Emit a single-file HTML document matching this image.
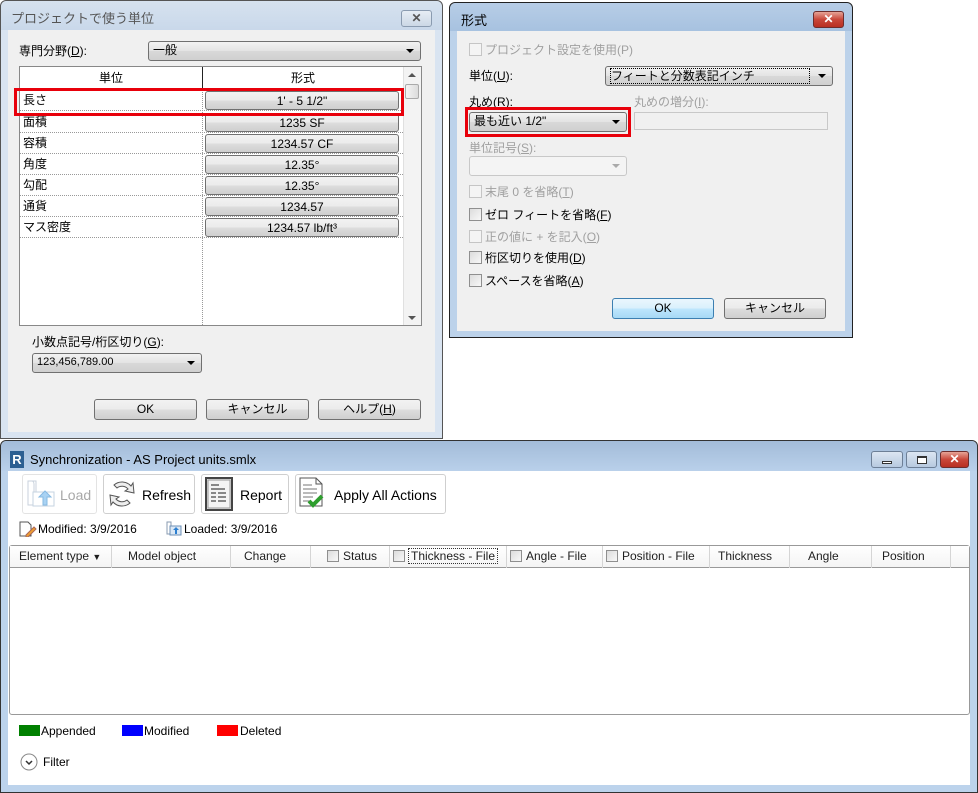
<!DOCTYPE html>
<html><head><meta charset="utf-8"><style>
*{box-sizing:border-box;margin:0;padding:0}
body{width:978px;height:793px;background:#fff;position:relative;overflow:hidden;font-family:"Liberation Sans","Noto Sans CJK JP",sans-serif;font-size:12px;color:#000}
.a{position:absolute}
.jp{font-family:"Liberation Sans","Noto Sans CJK JP",sans-serif;font-size:12px;white-space:nowrap}
.btn{position:absolute;border:1px solid #707070;border-radius:3px;background:linear-gradient(#f2f2f2 0%,#ebebeb 50%,#dddddd 51%,#cfcfcf 100%);text-align:center;font-size:12px;line-height:18px}
.cmb{position:absolute;border:1px solid #707070;border-radius:3px;background:linear-gradient(#f2f2f2,#e3e3e3 50%,#d8d8d8 51%,#d0d0d0);font-size:12px;line-height:17px;padding-left:4px}
.arr{position:absolute;right:6px;top:7px;width:0;height:0;border-left:4px solid transparent;border-right:4px solid transparent;border-top:4px solid #000}
.cb{position:absolute;width:13px;height:13px;border:1px solid #8f8f8f;background:linear-gradient(135deg,#dcdcdc,#f8f8f8)}
.dis{color:#a0a0a0}
.row{position:absolute;left:20px;width:383px;height:21px;border-bottom:1px dotted #999}
.row span{position:absolute;left:3px;top:1px}
.row .b{left:185px;top:1px;width:194px;height:19px}
.hd{position:absolute;top:0;height:22px;line-height:21px;border-right:1px solid #d5d5d5;font-size:12px;color:#1e1e1e}
</style></head><body>

<!-- Window 1 -->
<div class="a" style="left:0;top:0;width:443px;height:439px;border:1px solid #555;border-radius:6px 6px 0 0;background:#d9e4f1"></div>
<div class="a" style="left:1px;top:1px;width:441px;height:29px;background:linear-gradient(#d6e2ef,#c9d8ea);border-radius:6px 6px 0 0"></div>
<div class="a jp" style="left:11px;top:8px;font-size:13px;color:#555">プロジェクトで使う単位</div>
<div class="a" style="left:401px;top:10px;width:31px;height:17px;border:1px solid #8a9bb0;border-radius:3px;background:linear-gradient(#e6edf5,#ccd8e6);text-align:center;font-size:12px;line-height:15px;color:#555;font-weight:bold">✕</div>
<div class="a" style="left:8px;top:30px;width:427px;height:402px;background:#f0f0f0"></div>
<div class="a jp" style="left:19px;top:42px">専門分野(<u>D</u>):</div>
<div class="cmb" style="left:148px;top:41px;width:273px;height:20px">一般<div class="arr"></div></div>
<!-- table -->
<div class="a" style="left:19px;top:66px;width:403px;height:260px;border:1px solid #888;background:#fff"></div>
<div class="a" style="left:20px;top:67px;width:383px;height:22px;border-bottom:1px solid #222;background:#fff"></div>
<div class="a jp" style="left:20px;top:69px;width:182px;text-align:center">単位</div>
<div class="a jp" style="left:203px;top:69px;width:200px;text-align:center">形式</div>
<div class="a" style="left:202px;top:67px;width:1px;height:22px;background:#222"></div>
<div class="a" style="left:202px;top:89px;width:0;height:236px;border-left:1px dotted #999"></div>
<div class="a" style="left:403px;top:67px;width:18px;height:258px;background:#f3f3f3;border-left:1px solid #e0e0e0"></div>
<div class="a" style="left:408px;top:73px;border-left:4px solid transparent;border-right:4px solid transparent;border-bottom:4px solid #555"></div>
<div class="a" style="left:405px;top:84px;width:14px;height:15px;border:1px solid #aaa;border-radius:2px;background:linear-gradient(90deg,#f4f4f4,#dcdcdc)"></div>
<div class="a" style="left:408px;top:316px;border-left:4px solid transparent;border-right:4px solid transparent;border-top:4px solid #555"></div>
<div class="row" style="top:90px"><span>長さ</span><div class="btn b">1' - 5 1/2"</div></div>
<div class="row" style="top:112px"><span>面積</span><div class="btn b">1235 SF</div></div>
<div class="row" style="top:133px"><span>容積</span><div class="btn b">1234.57 CF</div></div>
<div class="row" style="top:154px"><span>角度</span><div class="btn b">12.35°</div></div>
<div class="row" style="top:175px"><span>勾配</span><div class="btn b">12.35°</div></div>
<div class="row" style="top:196px"><span>通貨</span><div class="btn b">1234.57</div></div>
<div class="row" style="top:217px"><span>マス密度</span><div class="btn b">1234.57 lb/ft³</div></div>
<div class="a" style="left:14px;top:88px;width:390px;height:28px;border:3px solid #e8000b"></div>
<div class="a jp" style="left:32px;top:333px">小数点記号/桁区切り(<u>G</u>):</div>
<div class="cmb" style="left:32px;top:353px;width:170px;height:20px;font-size:11px">123,456,789.00<div class="arr"></div></div>
<div class="btn" style="left:94px;top:399px;width:103px;height:21px">OK</div>
<div class="btn" style="left:206px;top:399px;width:103px;height:21px">キャンセル</div>
<div class="btn" style="left:318px;top:399px;width:103px;height:21px">ヘルプ(<u>H</u>)</div>

<!-- Window 2 -->
<div class="a" style="left:449px;top:2px;width:404px;height:336px;border:1px solid #222;border-radius:6px 6px 0 0;background:#bcd2ea"></div>
<div class="a" style="left:450px;top:3px;width:402px;height:28px;background:linear-gradient(#b7cde6,#a7c2e0);border-radius:6px 6px 0 0"></div>
<div class="a jp" style="left:461px;top:10px;font-size:13px">形式</div>
<div class="a" style="left:813px;top:11px;width:31px;height:17px;border:1px solid #6d2d2d;border-radius:3px;background:linear-gradient(#e6a497,#c9473a 50%,#b82f22);text-align:center;color:#fff;font-weight:bold;line-height:15px">✕</div>
<div class="a" style="left:457px;top:31px;width:388px;height:300px;background:#f0f0f0"></div>
<div class="cb" style="left:469px;top:43px;border-color:#c5c5c5;background:#f4f4f4"></div>
<div class="a jp dis" style="left:485px;top:41px">プロジェクト設定を使用(P)</div>
<div class="a jp" style="left:469px;top:67px">単位(<u>U</u>):</div>
<div class="cmb" style="left:605px;top:66px;width:228px;height:20px"><span style="border:1px dotted #000;display:inline-block;width:200px;line-height:14px;margin-top:1px">フィートと分数表記インチ</span><div class="arr"></div></div>
<div class="a jp" style="left:469px;top:93px">丸め(<u>R</u>):</div>
<div class="a jp dis" style="left:634px;top:93px">丸めの増分(<u>I</u>):</div>
<div class="cmb" style="left:469px;top:112px;width:158px;height:20px">最も近い 1/2"<div class="arr"></div></div>
<div class="a" style="left:465px;top:107px;width:166px;height:30px;border:3px solid #e8000b"></div>
<div class="a" style="left:634px;top:112px;width:194px;height:18px;border:1px solid #c8c8c8;background:#f0f0f0"></div>
<div class="a jp dis" style="left:469px;top:139px">単位記号(<u>S</u>):</div>
<div class="a" style="left:469px;top:156px;width:158px;height:20px;border:1px solid #c8c8c8;border-radius:3px;background:#f4f4f4"><div class="arr" style="border-top-color:#aaa"></div></div>
<div class="cb" style="left:469px;top:185px;border-color:#c5c5c5;background:#f4f4f4"></div>
<div class="a jp dis" style="left:485px;top:183px">末尾 0 を省略(<u>T</u>)</div>
<div class="cb" style="left:469px;top:208px"></div>
<div class="a jp" style="left:485px;top:206px">ゼロ フィートを省略(<u>F</u>)</div>
<div class="cb" style="left:469px;top:230px;border-color:#c5c5c5;background:#f4f4f4"></div>
<div class="a jp dis" style="left:485px;top:228px">正の値に + を記入(<u>O</u>)</div>
<div class="cb" style="left:469px;top:251px"></div>
<div class="a jp" style="left:485px;top:249px">桁区切りを使用(<u>D</u>)</div>
<div class="cb" style="left:469px;top:274px"></div>
<div class="a jp" style="left:485px;top:272px">スペースを省略(<u>A</u>)</div>
<div class="btn" style="left:612px;top:298px;width:102px;height:21px;border-color:#3c7fb1;background:linear-gradient(#eaf6fd,#d9f0fc 50%,#bee6fd 51%,#a7d9f5)">OK</div>
<div class="btn" style="left:724px;top:298px;width:102px;height:21px">キャンセル</div>

<!-- Window 3 -->
<div class="a" style="left:0;top:440px;width:978px;height:353px;border:1px solid #333;border-radius:6px 6px 0 0;background:#bcd3ec"></div>
<div class="a" style="left:1px;top:441px;width:976px;height:30px;background:linear-gradient(#a3bcd9,#b9d0ea);border-radius:6px 6px 0 0"></div>
<div class="a" style="left:10px;top:451px;width:14px;height:17px;background:#2c5f92;color:#fff;font-weight:bold;font-size:13px;line-height:17px;text-align:center">R</div>
<div class="a" style="left:30px;top:452px;font-size:13px">Synchronization - AS Project units.smlx</div>
<div class="a" style="left:871px;top:451px;width:32px;height:17px;border:1px solid #6d7f96;border-radius:3px;background:linear-gradient(#dce6f2,#b7c9df)"><div class="a" style="left:10px;top:9px;width:10px;height:3px;border:1px solid #333;background:#fff"></div></div>
<div class="a" style="left:906px;top:451px;width:31px;height:17px;border:1px solid #6d7f96;border-radius:3px;background:linear-gradient(#dce6f2,#b7c9df)"><div class="a" style="left:10px;top:4px;width:10px;height:8px;border:1px solid #333;border-top-width:2px;background:#fff"></div></div>
<div class="a" style="left:940px;top:451px;width:29px;height:17px;border:1px solid #6d2d2d;border-radius:3px;background:linear-gradient(#e6a497,#c9473a 50%,#b82f22);text-align:center;color:#fff;font-weight:bold;line-height:15px">✕</div>
<div class="a" style="left:8px;top:471px;width:962px;height:314px;background:#fff"></div>
<!-- toolbar -->
<div class="a" style="left:22px;top:474px;width:75px;height:40px;border:1px solid #e3e3e3;border-radius:3px"></div>
<svg class="a" style="left:24px;top:478px" width="32" height="32" viewBox="0 0 32 32"><path d="M4 3h8v24H4z M8 3c0 0 2 0 2 3v22" fill="none" stroke="#c8d2dc"/><rect x="9" y="14" width="21" height="14" fill="#fff" stroke="#c6d3e0"/><path d="M19 27v-8h-4l6-6 6 6h-4v8z" fill="#a9d2f3" stroke="#86b9e2"/></svg>
<div class="a" style="left:60px;top:487px;font-size:14px;color:#a8a8a8">Load</div>
<div class="a" style="left:103px;top:474px;width:92px;height:40px;border:1px solid #cfcfcf;border-radius:3px"></div>
<svg class="a" style="left:106px;top:477px" width="32" height="34" viewBox="0 0 32 34"><path d="M8 8a12 12 0 0 1 17 1l2-3 1 10-9-2 3-2a8 8 0 0 0-11-1z" fill="#eee" stroke="#555"/><path d="M24 26a12 12 0 0 1-17-1l-2 3-1-10 9 2-3 2a8 8 0 0 0 11 1z" fill="#eee" stroke="#555"/></svg>
<div class="a" style="left:142px;top:487px;font-size:14px">Refresh</div>
<div class="a" style="left:201px;top:474px;width:88px;height:40px;border:1px solid #cfcfcf;border-radius:3px"></div>
<svg class="a" style="left:205px;top:477px" width="28" height="34" viewBox="0 0 28 34"><rect x="1" y="1" width="26" height="32" fill="#e8e8e8" stroke="#444" stroke-width="2"/><rect x="3" y="3" width="22" height="28" fill="#f4f4f4" stroke="#999"/><g stroke="#888" stroke-width="2"><path d="M6 8h8M6 12h14M6 16h5M13 16h8M6 20h5M13 20h8M6 24h5M13 24h8"/></g></svg>
<div class="a" style="left:240px;top:487px;font-size:14px">Report</div>
<div class="a" style="left:295px;top:474px;width:151px;height:40px;border:1px solid #cfcfcf;border-radius:3px"></div>
<svg class="a" style="left:298px;top:477px" width="32" height="34" viewBox="0 0 32 34"><path d="M2 1h16l6 6v22H2z" fill="#fff" stroke="#555"/><path d="M18 1v6h6" fill="none" stroke="#555"/><g stroke="#777"><path d="M5 8h9M5 12h14M5 16h14M5 20h10M5 24h8"/></g><path d="M11 24l4 4 9-9" fill="none" stroke="#2e9e2e" stroke-width="4"/></svg>
<div class="a" style="left:334px;top:487px;font-size:14px">Apply All Actions</div>
<svg class="a" style="left:19px;top:521px" width="18" height="16" viewBox="0 0 18 16"><path d="M1 1h8l3 3v11H1z" fill="#fff" stroke="#555"/><path d="M7 14l8-8 2 2-8 8H7z" fill="#f0a030" stroke="#a65"/></svg>
<div class="a" style="left:38px;top:522px;font-size:12px">Modified: 3/9/2016</div>
<svg class="a" style="left:166px;top:521px" width="16" height="15" viewBox="0 0 16 15"><path d="M1 1h4v12H1z" fill="none" stroke="#8a9bb0"/><rect x="4" y="5" width="11" height="9" fill="#dbe8f5" stroke="#6d8fb6"/><path d="M9 13V9H7l3-3 3 3h-2v4z" fill="#2d7fd0"/></svg>
<div class="a" style="left:184px;top:522px;font-size:12px">Loaded: 3/9/2016</div>
<!-- grid -->
<div class="a" style="left:9px;top:545px;width:961px;height:170px;border:1px solid #999;border-radius:3px"></div>
<div class="a" style="left:10px;top:546px;width:959px;height:22px;border-bottom:1px solid #999;background:linear-gradient(#fff,#f4f4f4)">
<div class="hd" style="left:0;width:102px;padding-left:9px">Element type <span style="font-size:9px">▼</span></div>
<div class="hd" style="left:102px;width:119px;padding-left:16px">Model object</div>
<div class="hd" style="left:221px;width:80px;padding-left:13px">Change</div>
<div class="hd" style="left:301px;width:79px;padding-left:32px">Status</div>
<div class="hd" style="left:380px;width:117px;padding-left:18px"><span style="border:1px dotted #333;padding:0 2px">Thickness - File</span></div>
<div class="hd" style="left:497px;width:96px;padding-left:19px">Angle - File</div>
<div class="hd" style="left:593px;width:107px;padding-left:19px">Position - File</div>
<div class="hd" style="left:700px;width:80px;padding-left:8px">Thickness</div>
<div class="hd" style="left:780px;width:82px;padding-left:18px">Angle</div>
<div class="hd" style="left:862px;width:79px;padding-left:10px">Position</div>
</div>
<div class="cb" style="left:327px;top:550px;width:12px;height:12px"></div>
<div class="cb" style="left:393px;top:550px;width:12px;height:12px"></div>
<div class="cb" style="left:510px;top:550px;width:12px;height:12px"></div>
<div class="cb" style="left:606px;top:550px;width:12px;height:12px"></div>
<!-- legend -->
<div class="a" style="left:19px;top:725px;width:21px;height:11px;background:#008000"></div>
<div class="a" style="left:41px;top:724px">Appended</div>
<div class="a" style="left:122px;top:725px;width:21px;height:11px;background:#0000ff"></div>
<div class="a" style="left:144px;top:724px">Modified</div>
<div class="a" style="left:217px;top:725px;width:21px;height:11px;background:#ff0000"></div>
<div class="a" style="left:240px;top:724px">Deleted</div>
<svg class="a" style="left:20px;top:753px" width="18" height="18" viewBox="0 0 18 18"><circle cx="9" cy="9" r="8" fill="#fff" stroke="#888"/><path d="M6 8l3 3 3-3" fill="none" stroke="#333" stroke-width="1.5"/></svg>
<div class="a" style="left:43px;top:755px">Filter</div>
</body></html>
